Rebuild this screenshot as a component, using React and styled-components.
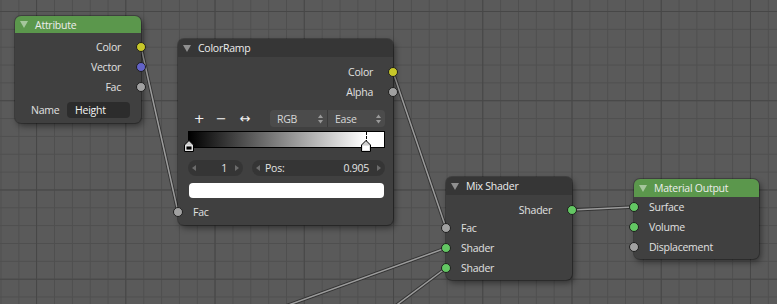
import React from 'react'
import styled, { createGlobalStyle } from 'styled-components'

const GlobalStyle = createGlobalStyle`
  body { margin: 0; background: #5a5a5a; }
`

const SOCKET = {
  color: '#c7c729',
  vector: '#6363c7',
  float: '#a1a1a1',
  shader: '#63c763',
}

const Canvas = styled.div`
  position: relative;
  width: 777px;
  height: 304px;
  overflow: hidden;
  font-family: "Open Sans", "DejaVu Sans", sans-serif;
  font-size: 10.5px;
  letter-spacing: -0.25px;
  color: #e0e0e0;
  background-color: #5a5a5a;
  background-image:
    linear-gradient(to bottom, #474747 1px, transparent 1px),
    linear-gradient(to right, #474747 1px, transparent 1px),
    linear-gradient(to bottom, #4f4f4f 1px, transparent 1px),
    linear-gradient(to right, #4f4f4f 1px, transparent 1px);
  background-size: 89.25px 89.25px, 89.25px 89.25px, 17.85px 17.85px, 17.85px 17.85px;
  background-position: 0 11px, 36px 0, 0 11px, 0.5px 0;
`

const Wires = styled.svg`
  position: absolute;
  left: 0;
  top: 0;
`

const Node = styled.div`
  position: absolute;
  left: ${p => p.$x}px;
  top: ${p => p.$y}px;
  width: ${p => p.$w}px;
  padding-bottom: ${p => p.$pb || 0}px;
  background: #404040;
  border-radius: 6px;
  box-shadow: 0 0 0 1px rgba(0,0,0,0.25), 2px 3px 6px rgba(0,0,0,0.45);
`

const Header = styled.div`
  height: ${p => p.$h || 18}px;
  display: flex;
  align-items: center;
  gap: 7px;
  padding-left: 5px;
  background: ${p => p.$green ? '#5b974c' : '#363636'};
  border-radius: 6px 6px 0 0;
  color: #ededed;
  margin-bottom: ${p => p.$mb || 0}px;
`

const Collapse = styled.span`
  width: 0;
  height: 0;
  border-left: 4px solid transparent;
  border-right: 4px solid transparent;
  border-top: 7px solid rgba(255,255,255,0.45);
`

const Row = styled.div`
  position: relative;
  height: 20px;
  display: flex;
  align-items: center;
  justify-content: ${p => p.$out ? 'flex-end' : 'flex-start'};
  padding: ${p => p.$out ? '0 20px 0 0' : '0 0 0 15px'};
  margin-top: ${p => p.$mt || 0}px;
`

const Socket = styled.span`
  position: absolute;
  top: 50%;
  ${p => p.$out ? 'right: -5px;' : 'left: -5px;'}
  width: 8px;
  height: 8px;
  margin-top: -5px;
  border-radius: 50%;
  border: 1px solid #1e1e1e;
  background: ${p => p.$color};
`

const NameRow = styled.div`
  height: 20px;
  margin-top: 3px;
  display: flex;
  align-items: center;
  padding: 0 11px 0 16px;
`

const TextField = styled.div`
  margin-left: auto;
  width: 63px;
  height: 16px;
  box-sizing: border-box;
  padding-left: 8px;
  display: flex;
  align-items: center;
  border-radius: 4px;
  background: #2c2c2c;
  color: #f4f4f4;
`

const RampArea = styled.div`
  padding: 8px 8px 0 10px;
`

const Toolbar = styled.div`
  display: flex;
  align-items: center;
  height: 17px;
`

const ToolIcon = styled.span`
  width: ${p => p.$w || 22}px;
  text-align: center;
  font-family: "DejaVu Sans", sans-serif;
  font-size: 13px;
  color: #f2f2f2;
`

const Dropdown = styled.div`
  margin-left: auto;
  display: flex;
  width: 115px;
  height: 17px;
  border-radius: 4px;
  background: #4b4b4b;
  overflow: hidden;
`

const DropPart = styled.div`
  flex: 1;
  display: flex;
  align-items: center;
  justify-content: space-between;
  padding: 0 4px 0 7px;
  color: #d8d8d8;
  & + & { border-left: 1px solid #3a3a3a; }
`

const RampBar = styled.div`
  position: relative;
  margin-top: 4px;
  height: 17px;
  box-sizing: border-box;
  border: 1px solid #000;
  background: linear-gradient(to right, #000 0%, #fff 90.5%, #fff 100%);
`

const StopLine = styled.span`
  position: absolute;
  top: 0;
  height: 11px;
  border-left: 1px dashed #000;
`

const StopMark = styled.svg`
  position: absolute;
  bottom: -5px;
`

const NumRow = styled.div`
  display: flex;
  gap: 9px;
  margin-top: 12px;
  height: 16px;
`

const NumField = styled.div`
  width: ${p => p.$w}px;
  display: flex;
  align-items: center;
  box-sizing: border-box;
  padding: 0 4px;
  border-radius: 8px;
  background: #353535;
  color: #e4e4e4;
`

const Arrow = styled.span`
  width: 0;
  height: 0;
  border-top: 3px solid transparent;
  border-bottom: 3px solid transparent;
  ${p => p.$right ? 'border-left: 4px solid #6c6c6c;' : 'border-right: 4px solid #6c6c6c;'}
`

const NumLabel = styled.span`
  margin-left: 5px;
`

const NumValue = styled.span`
  margin-left: auto;
  margin-right: 8px;
`

const Swatch = styled.div`
  margin: 7px 1px 0;
  height: 15px;
  border-radius: 4px;
  background: #fff;
`

function UpDown() {
  return (
    <svg width="5" height="10" viewBox="0 0 5 10">
      <polygon points="0,4 2.5,0.5 5,4" fill="#9a9a9a" />
      <polygon points="0,6 2.5,9.5 5,6" fill="#9a9a9a" />
    </svg>
  )
}

function Stop({ pos, fill, line }) {
  const left = 197 * pos - 1
  return (
    <>
      {line && <StopLine style={{ left: left }} />}
      <StopMark width="10" height="12" viewBox="0 0 10 12" style={{ left: left - 5 }}>
        <polygon points="0.5,5 5,0.5 9.5,5 9.5,11.5 0.5,11.5" fill="#cfcfcf" stroke="#000" />
        <rect x="2" y="6" width="6" height="4" fill={fill} stroke="#fff" strokeWidth="0.8" />
      </StopMark>
    </>
  )
}

function Wire({ d }) {
  return (
    <>
      <path d={d} stroke="#333" strokeWidth="3.4" fill="none" />
      <path d={d} stroke="#9c9c9c" strokeWidth="1.5" fill="none" />
    </>
  )
}

export default function App() {
  return (
    <Canvas>
      <GlobalStyle />
      <Wires width="777" height="304" viewBox="0 0 777 304">
        <Wire d="M141 47 L178 212" />
        <Wire d="M393 72 L446 228" />
        <Wire d="M572 210 L634 207" />
        <Wire d="M446 248 L200 337" />
        <Wire d="M446 268 L370 325" />
      </Wires>

      <Node $x={15} $y={16} $w={126} $pb={3}>
        <Header $h={17} $mb={4} $green>
          <Collapse />Attribute
        </Header>
        <Row $out>Color<Socket $out $color={SOCKET.color} /></Row>
        <Row $out>Vector<Socket $out $color={SOCKET.vector} /></Row>
        <Row $out>Fac<Socket $out $color={SOCKET.float} /></Row>
        <NameRow>
          Name
          <TextField>Height</TextField>
        </NameRow>
      </Node>

      <Node $x={178} $y={39} $w={215} $pb={3}>
        <Header $mb={5}>
          <Collapse />ColorRamp
        </Header>
        <Row $out>Color<Socket $out $color={SOCKET.color} /></Row>
        <Row $out>Alpha<Socket $out $color={SOCKET.float} /></Row>
        <RampArea>
          <Toolbar>
            <ToolIcon>+</ToolIcon>
            <ToolIcon>−</ToolIcon>
            <ToolIcon $w={26}>↔</ToolIcon>
            <Dropdown>
              <DropPart>RGB<UpDown /></DropPart>
              <DropPart>Ease<UpDown /></DropPart>
            </Dropdown>
          </Toolbar>
          <RampBar>
            <Stop pos={0.005} fill="#000" />
            <Stop pos={0.905} fill="#fff" line />
          </RampBar>
          <NumRow>
            <NumField $w={55}>
              <Arrow />
              <NumValue>1</NumValue>
              <Arrow $right />
            </NumField>
            <NumField $w={133}>
              <Arrow />
              <NumLabel>Pos:</NumLabel>
              <NumValue>0.905</NumValue>
              <Arrow $right />
            </NumField>
          </NumRow>
          <Swatch />
        </RampArea>
        <Row $mt={4}>Fac<Socket $color={SOCKET.float} /></Row>
      </Node>

      <Node $x={446} $y={177} $w={126} $pb={2}>
        <Header $mb={5}>
          <Collapse />Mix Shader
        </Header>
        <Row $out>Shader<Socket $out $color={SOCKET.shader} /></Row>
        <Row $mt={-2}>Fac<Socket $color={SOCKET.float} /></Row>
        <Row>Shader<Socket $color={SOCKET.shader} /></Row>
        <Row>Shader<Socket $color={SOCKET.shader} /></Row>
      </Node>

      <Node $x={634} $y={179} $w={125} $pb={2}>
        <Header $green>
          <Collapse />Material Output
        </Header>
        <Row>Surface<Socket $color={SOCKET.shader} /></Row>
        <Row>Volume<Socket $color={SOCKET.shader} /></Row>
        <Row>Displacement<Socket $color={SOCKET.float} /></Row>
      </Node>
    </Canvas>
  )
}
